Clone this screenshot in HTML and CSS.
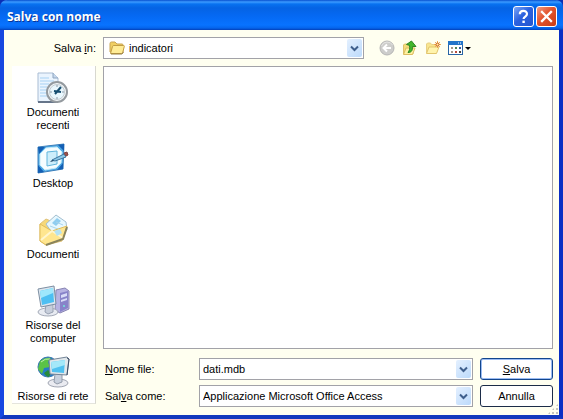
FILE: index.html
```
<!DOCTYPE html>
<html lang="it">
<head>
    <meta charset="UTF-8">
    <title>Salva con nome</title>
    <link rel="stylesheet" href="styles.css">
</head>
<body>
    <form class="dialog">
        <header class="titlebar">
            <h1>Salva con nome</h1>
            <button type="button" class="tb-button help" aria-label="Guida">
                <svg width="19" height="19" viewBox="0 0 19 19"><path d="M5.8 7.2C5.8 2.8 13 2.8 13 7c0 2.600-3.400 2.500-3.400 5" fill="none" stroke="#fff" stroke-width="2.200"/><rect x="8.400" y="13.600" width="2.400" height="2.400" fill="#fff"/></svg>
            </button>
            <button type="button" class="tb-button close" aria-label="Chiudi">
                <svg width="19" height="19" viewBox="0 0 19 19"><path d="M5 5l9 9M14 5l-9 9" stroke="#fff" stroke-width="2.300" stroke-linecap="square"/></svg>
            </button>
        </header>

        <div class="content">
            <label class="look-label" for="folder">Salva <u>i</u>n:</label>
            <div class="look-row">
                <div class="combo combo-folder">
                    <svg class="folder-icon" width="16" height="14" viewBox="0 0 16 14">
                        <path d="M1 11V2.500Q1 1 2.500 1H6l2 2h5q1 0 1 1v7z" fill="#f0cf63" stroke="#c9a552"/>
                        <path d="M1.500 12.500l2-7q.3-1 1.300-1h9.700q1 0 .8 1l-1.600 6q-.3 1-1.400 1z" fill="#ffec96" stroke="#c29d45"/>
                        <path d="M2 13h11l1.500-2" fill="none" stroke="#9a8040"/>
                    </svg>
                    <select id="folder"><option>indicatori</option></select>
                    <span class="arrow"><svg width="9" height="7" viewBox="0 0 9 7"><path d="M1 1.500l3.500 3.500L8 1.500" fill="none" stroke="#3f5f8c" stroke-width="2"/></svg></span>
                </div>
                <div class="tools">
                    <button type="button" aria-label="Indietro">
                        <svg width="16" height="16" viewBox="0 0 16 16"><circle cx="8" cy="8" r="7" fill="#cdcdcb" stroke="#b6b6b5"/><path d="M2.500 6Q4 2 8 2t5.500 3" fill="none" stroke="#e4e4e2"/><path d="M12 8H4.500M8 4.500L4.500 8 8 11.500" fill="none" stroke="#fff" stroke-width="2"/></svg>
                    </button>
                    <button type="button" aria-label="Livello superiore">
                        <svg width="16" height="16" viewBox="0 0 16 16"><path d="M1.500 14V5l1-1h3l1 1.500H11V14z" fill="#f5dc7a" stroke="#dfc06a"/><path d="M1.500 14.500L4 8h9l-2.500 6.500z" fill="#fff1a0" stroke="#dcbc62"/><path d="M6 12.500c4 0 4.500-2.500 4.500-6H14L9.500 1 4.500 4.500l3 .8C8 9 7.500 10.500 6 12.500z" fill="#43b62c" stroke="#2c8522"/></svg>
                    </button>
                    <button type="button" aria-label="Crea nuova cartella">
                        <svg width="16" height="16" viewBox="0 0 16 16"><path d="M1.500 13V4l1-1h3l1 1.500H11V13z" fill="#f8e58e" stroke="#e8d084"/><path d="M1.500 13.500L4 7h10l-2.500 6.500z" fill="#fff4ad" stroke="#e2c56c"/><path d="M12.500 1v7M9 4.500h7M10 2l5 5M15 2l-5 5" stroke="#f0ab57"/><circle cx="12.500" cy="4.500" r="1.500" fill="#fff0a0" stroke="#c95b20"/></svg>
                    </button>
                    <button type="button" aria-label="Visualizza">
                        <svg width="23" height="16" viewBox="0 0 23 16"><rect x=".5" y="1.500" width="14" height="13" fill="#fff" stroke="#2865a5"/><path d="M0 1h15v4H0z" fill="#2375c9"/><path d="M10 3h1M12 3h1" stroke="#fff"/><path d="M3 7h2v2H3zM3 11h2v2H3z" fill="#a69789"/><path d="M7 7h2v2H7z" fill="#528757"/><path d="M11 7h2v2h-2z" fill="#315a9b"/><path d="M7 11h2v2H7z" fill="#bb4d3d"/><path d="M11 11h2v2h-2z" fill="#444"/><path d="M17 7h6l-3 3z" fill="#000"/></svg>
                    </button>
                </div>
            </div>

            <nav class="places">
                <button type="button">
                    <svg width="32" height="32" viewBox="0 0 32 32">
                        <path d="M1 1h15l5 5v24H1z" fill="#eaf4fe" stroke="#a9bcd3"/>
                        <path d="M16 1v5h5" fill="#c6d8ed" stroke="#8ea5c0"/>
                        <path d="M3 6h9M3 9h14M3 12h9M3 15h7M3 18h7M3 21h7M3 24h8" stroke="#a6d1f3"/>
                        <path d="M1 30h20" stroke="#66758a" stroke-width="2"/>
                        <circle cx="20" cy="20" r="10" fill="#f3f8fa" stroke="#949a9f" stroke-width="2"/>
                        <circle cx="20" cy="20" r="7.500" fill="#e9f7fd" stroke="#c3cbd1"/>
                        <path d="M20 13v2M20 25v2M13 20h2M25 20h2" stroke="#8b9aa8"/>
                        <path d="M24 15l-6 7M17 19l7 1" fill="none" stroke="#164e70" stroke-width="2"/>
                    </svg>
                    <span>Documenti recenti</span>
                </button>
                <button type="button">
                    <svg width="32" height="32" viewBox="0 0 32 32">
                        <path d="M1 4l26-3-1 25-25 4z" fill="#4fa9e4" stroke="#3d7fba"/>
                        <path d="M1 4h7l-6 7zM21 2l6-1v7zM1 22l6 7-6 1zM26 20v6l-6 1z" fill="#145fb4"/>
                        <path d="M9 5l11-1 5 5-1 11-5 5-11 2-5-5V11z" fill="#f5fdff" stroke="#c2eafa"/>
                        <path d="M10 9l10-1v13l-10 2z" fill="#cdeefb" stroke="#60b5dc"/>
                        <path d="M15 17l12-6 2 3-11 4z" fill="#8cc8e8" stroke="#39739b"/>
                        <path d="M27 10l3-1 1 3-2 1z" fill="#a5504a" stroke="#7c4340"/>
                        <path d="M15 17l-2 2 4-1z" fill="#13395c"/>
                    </svg>
                    <span>Desktop</span>
                </button>
                <button type="button">
                    <svg width="32" height="32" viewBox="0 0 32 32">
                        <path d="M3 10l6-5 19 8-3 14-16 4-6-4z" fill="#f6d879" stroke="#dfc27a"/>
                        <path d="M9 10l10-9 10 7 1 8-12 7z" fill="#e6f7fe" stroke="#a3bfd0"/>
                        <path d="M15 9l5-5 4 3-5 5z" fill="#8fcdf0"/>
                        <path d="M13 12l8 3M19 8l7 3" stroke="#a9d4eb"/>
                        <path d="M3 10l12 7 15-5-4 13-17 6-6-4z" fill="#ffe68f" stroke="#e1bd5c"/>
                        <path d="M4 26l11-9 11 7" fill="none" stroke="#fff6cf" stroke-width="2"/>
                        <path d="M17 17l6-2 2 4-5 3z" fill="#b5e2f3"/>
                        <path d="M9 31l17-6 4-12" fill="none" stroke="#8a845c" stroke-width="2"/>
                    </svg>
                    <span>Documenti</span>
                </button>
                <button type="button">
                    <svg width="34" height="32" viewBox="0 0 34 32">
                        <path d="M20 5l9-2 4 3v18l-9 4-5-3z" fill="#b7b3e2" stroke="#8884b2"/>
                        <path d="M24 8l8-2v17l-8 4z" fill="#8883c9"/>
                        <path d="M25 10l6-2v3l-6 2zM25 15l6-2v2l-6 2z" fill="#d9dcf7"/>
                        <circle cx="28" cy="21" r="1" fill="#72e9dd"/>
                        <ellipse cx="12" cy="27" rx="10" ry="4" fill="#e8ebf2" stroke="#a3a9b7"/>
                        <path d="M10 19h7v8l-5 2-3-2z" fill="#c7cedb" stroke="#98a1b2"/>
                        <path d="M2 4l16-3 2 18-15 3z" fill="#dce5ee" stroke="#7d8fa3"/>
                        <path d="M4 6l13-3 1 14-12 3z" fill="#4dbff2"/>
                        <path d="M4 6l13-3v5L5 13z" fill="#9ee7fc"/>
                    </svg>
                    <span>Risorse del computer</span>
                </button>
                <button type="button">
                    <svg width="34" height="32" viewBox="0 0 34 32">
                        <circle cx="12" cy="11" r="10" fill="#247dc6" stroke="#3c76b0"/>
                        <path d="M4 5q5-4 11-3l-3 4 2 5-6 1-2 6-4-5z" fill="#5bc346"/>
                        <path d="M8 17l4-3 3 3-2 4q-3 0-5-4z" fill="#288a3c"/>
                        <path d="M5 6q4-4 9-3" fill="none" stroke="#c1f0b2"/>
                        <ellipse cx="22" cy="27" rx="10" ry="4" fill="#eaebf1" stroke="#a0a5b2"/>
                        <path d="M19 18h7v8l-5 2-3-2z" fill="#c8d0dd" stroke="#929baa"/>
                        <path d="M13 4l18-3 2 2-2 16-17-1z" fill="#e0e7eb" stroke="#748497"/>
                        <path d="M15 6l14-2-1 13-12-1z" fill="#50c1f0"/>
                        <path d="M15 6l14-2v5l-13 4z" fill="#a4e8f9"/>
                        <path d="M31 2l2 1-2 16" fill="none" stroke="#3c4c65"/>
                    </svg>
                    <span>Risorse di rete</span>
                </button>
            </nav>

            <div class="file-list" role="listbox" aria-label="File"></div>

            <div class="fields">
                <label for="filename"><u>N</u>ome file:</label>
                <div class="combo">
                    <input type="text" id="filename" value="dati.mdb">
                    <button type="button" class="arrow" aria-label="Mostra nomi"><svg width="9" height="7" viewBox="0 0 9 7"><path d="M1 1.500l3.500 3.500L8 1.500" fill="none" stroke="#3f5f8c" stroke-width="2"/></svg></button>
                </div>
                <button type="submit" class="action default"><u>S</u>alva</button>

                <label for="filetype">Sal<u>v</u>a come:</label>
                <div class="combo">
                    <select id="filetype"><option>Applicazione Microsoft Office Access</option></select>
                    <span class="arrow"><svg width="9" height="7" viewBox="0 0 9 7"><path d="M1 1.500l3.500 3.500L8 1.500" fill="none" stroke="#3f5f8c" stroke-width="2"/></svg></span>
                </div>
                <button type="button" class="action">Annulla</button>
            </div>
        </div>
        <span class="grip"></span>
    </form>
</body>
</html>
```
FILE: styles.css
```
* {
    box-sizing: border-box;
}
body {
    margin: 0;
    background-color: #0a2fb4;
    font-family: "Liberation Sans", Arial, sans-serif;
    font-size: 11px;
    line-height: 13px;
    color: #000;
}
button, input, select {
    font: inherit;
    color: inherit;
    margin: 0;
    padding: 0;
    border: 0;
    background: none;
}
svg {
    display: block;
    flex: none;
}
.dialog {
    position: relative;
    display: flex;
    flex-direction: column;
    min-height: 100vh;
    background-color: #fffff0;
    border: 4px solid #1848e0;
    border-top: 0;
    border-right-color: #0a2fc4;
    border-bottom-color: #1238bd;
    border-radius: 7px 7px 0 0;
}

/* title bar */
.titlebar {
    display: flex;
    align-items: center;
    gap: 2px;
    height: 30px;
    margin: 0 -4px;
    padding: 3px 6px 0 7px;
    border-radius: 7px 7px 0 0;
    background: linear-gradient(#0750cf 0, #3c9bff 2px, #0872f0 4px, #0563e4 8px, #0569f3 16px, #0873ff 25px, #0565ec 28px, #0340b8 30px);
}
.titlebar h1 {
    flex: 1;
    margin: 0;
    font-family: "Open Sans", sans-serif;
    font-size: 12px;
    line-height: 18px;
    font-weight: bold;
    color: #fff;
    text-shadow: 1px 1px #0b3596;
}
.tb-button {
    width: 21px;
    height: 21px;
    border: 1px solid #fff;
    border-radius: 3px;
}
.help {
    background: linear-gradient(135deg, #7ba6f6, #2c62df 45%, #2456cf);
}
.close {
    background: linear-gradient(135deg, #f19a80, #e2532d 45%, #c93c14);
}

/* dialog body */
.content {
    flex: 1;
    display: grid;
    grid-template-columns: 84px 1fr;
    grid-template-rows: 22px 1fr auto;
    column-gap: 7px;
    padding: 7px 6px 8px 8px;
}
.look-label {
    align-self: center;
    text-align: right;
}
.look-row {
    display: flex;
    align-items: center;
}
.combo {
    display: flex;
    align-items: center;
    height: 22px;
    padding: 1px;
    border: 1px solid #a2a2a8;
    background-color: #fff;
}
.combo input, .combo select {
    flex: 1;
    min-width: 0;
    height: 18px;
    padding-left: 2px;
    appearance: none;
    outline: none;
}
.combo select {
    margin-right: -15px;
    padding-right: 15px;
}
.combo-folder {
    flex: 0 1 261px;
}
.combo-folder select {
    padding-left: 4px;
}
.folder-icon {
    margin-left: 4px;
}
.arrow {
    display: flex;
    align-items: center;
    justify-content: center;
    width: 15px;
    height: 18px;
    border-radius: 2px;
    background: linear-gradient(135deg, #e4f0ff, #bcdafb);
    pointer-events: none;
}
.tools {
    display: flex;
    gap: 7px;
    margin-left: 15px;
}

/* places bar */
.places {
    grid-row: 2 / 4;
    margin: 7px 0 3px;
    padding: 6px 1px 0 0;
    background-color: #fff;
    border-right: 1px solid #d8d8d0;
    border-bottom: 1px solid #e4e4dc;
}
.places button {
    display: flex;
    flex-direction: column;
    align-items: center;
    gap: 2px;
    width: 100%;
    height: 71px;
}
.places button:last-child {
    height: auto;
}
.places span {
    max-width: 80px;
}
.file-list {
    margin-top: 7px;
    background-color: #fff;
    border: 1px solid #a2a2a8;
}

/* file name, type and actions */
.fields {
    display: grid;
    grid-template-columns: 89px 1fr 73px;
    gap: 5px 7px;
    align-items: center;
    padding-top: 9px;
}
.fields label {
    padding-left: 2px;
}
.action {
    height: 22px;
    border: 1px solid #1c2c48;
    border-radius: 3px;
    background-color: #fff;
}
.default {
    border-color: #12458c;
    box-shadow: inset 0 0 0 1px #9bbcf2;
}

/* resize grip */
.grip {
    position: absolute;
    right: 0;
    bottom: 0;
    width: 12px;
    height: 12px;
    background: radial-gradient(circle, #c4c4bc 1px, transparent 1px) 0 0 / 4px 4px;
    clip-path: polygon(100% 0, 100% 100%, 0 100%);
}
```
